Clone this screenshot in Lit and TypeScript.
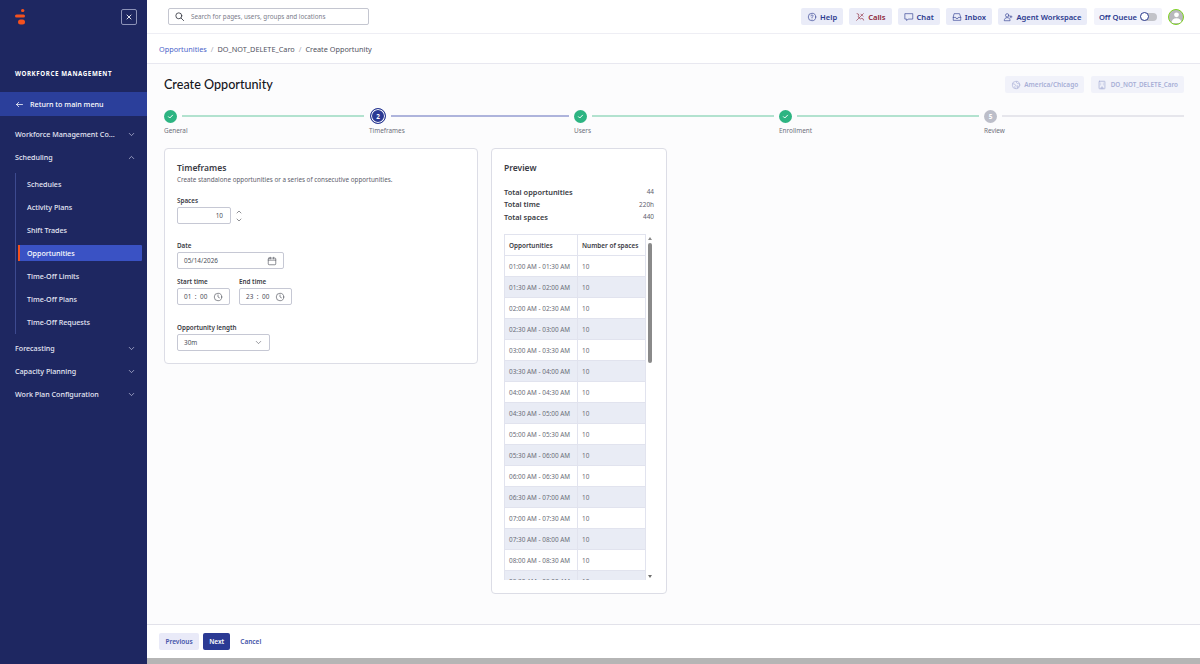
import { LitElement, html, css, svg } from 'lit';
import { customElement } from 'lit/decorators.js';

const icon = (size: number, body: unknown, sw = 1.5) => html`<svg
  width=${size} height=${size} viewBox="0 0 24 24" fill="none" stroke="currentColor"
  stroke-width=${sw} stroke-linecap="round" stroke-linejoin="round">${body}</svg>`;

const chevronDown = svg`<path d="M6 9l6 6 6-6"/>`;
const chevronUp = svg`<path d="M6 15l6-6 6 6"/>`;
const clock = svg`<circle cx="12" cy="12" r="9"/><path d="M12 7v5l3.5 2"/>`;
const check = svg`<path d="M6.5 12.5l3.5 3.5 7.5-7.5"/>`;

const sideGroups = ['Forecasting', 'Capacity Planning', 'Work Plan Configuration'];
const subItems = ['Schedules', 'Activity Plans', 'Shift Trades', 'Opportunities', 'Time-Off Limits', 'Time-Off Plans', 'Time-Off Requests'];

const fmt = (mins: number) => {
  const h = Math.floor(mins / 60);
  return `${String(h).padStart(2, '0')}:${String(mins % 60).padStart(2, '0')} AM`;
};
const slots = Array.from({ length: 16 }, (_, i) => `${fmt(60 + i * 30)} - ${fmt(90 + i * 30)}`);

const steps = [
  { label: 'General', state: 'done' },
  { label: 'Timeframes', state: 'current' },
  { label: 'Users', state: 'done' },
  { label: 'Enrollment', state: 'done' },
  { label: 'Review', state: 'todo' },
];

@customElement('side-nav')
export class SideNav extends LitElement {
  static styles = css`
    :host {
      display: block;
      width: 147px;
      flex: none;
      background: #1e2761;
      color: #e6e8f5;
      font: 500 7.15px 'Noto Sans', sans-serif;
    }
    .head {
      height: 34px;
      position: relative;
      display: flex;
      align-items: center;
      justify-content: space-between;
      padding: 0 10px 0 15px;
    }
    .close {
      width: 16px;
      height: 16px;
      box-sizing: border-box;
      border: 1px solid #8d93b8;
      border-radius: 2px;
      display: flex;
      align-items: center;
      justify-content: center;
      color: #fff;
    }
    .section {
      height: 58px;
      box-sizing: border-box;
      padding: 33px 0 0 15px;
      font-size: 6.2px;
      line-height: 14px;
      font-weight: 700;
      letter-spacing: 0.58px;
      color: #fff;
    }
    .back {
      height: 24px;
      background: #2b3f9b;
      display: flex;
      align-items: center;
      gap: 6px;
      padding-left: 15px;
      color: #fff;
      font-size: 7.2px;
    }
    .list { padding-top: 6.5px; }
    .group {
      height: 23px;
      display: flex;
      align-items: center;
      justify-content: space-between;
      padding: 0 11px 0 15px;
      white-space: nowrap;
    }
    .sub {
      margin: 4px 0 3px 15px;
      border-left: 1px solid #3d4a8f;
      padding-left: 2px;
      width: 124px;
    }
    .item {
      height: 23px;
      display: flex;
      align-items: center;
      padding-left: 9px;
      box-sizing: border-box;
    }
    .item.active {
      height: 16px;
      margin: 3.5px 0;
      background: #3a52c4;
      border-left: 2px solid #f4511e;
      padding-left: 7px;
      color: #fff;
      border-radius: 0 1px 1px 0;
    }
    .chev { color: #c9cde6; display: flex; }
  `;

  render() {
    return html`
      <div class="head">
        <svg width="10" height="16" viewBox="0 0 10 16" fill="#f4511e">
          <rect x="6" y="0" width="3.4" height="3" rx="1.5"></rect>
          <rect x="0" y="5.5" width="10" height="3" rx="1.5"></rect>
          <rect x="3" y="10.5" width="7" height="5" rx="2.5"></rect>
        </svg>
        <div class="close">${icon(8, svg`<path d="M6 6l12 12M18 6L6 18"/>`, 2.6)}</div>
      </div>
      <div class="section">WORKFORCE MANAGEMENT</div>
      <div class="back">
        ${icon(9, svg`<path d="M20 12H4M10 6l-6 6 6 6"/>`, 2)}
        <span>Return to main menu</span>
      </div>
      <div class="list">
        <div class="group"><span>Workforce Management Co...</span><span class="chev">${icon(9, chevronDown, 1.8)}</span></div>
        <div class="group"><span>Scheduling</span><span class="chev">${icon(9, chevronUp, 1.8)}</span></div>
        <div class="sub">
          ${subItems.map((s) => html`<div class="item ${s === 'Opportunities' ? 'active' : ''}">${s}</div>`)}
        </div>
        ${sideGroups.map((g) => html`<div class="group"><span>${g}</span><span class="chev">${icon(9, chevronDown, 1.8)}</span></div>`)}
      </div>
    `;
  }
}

@customElement('top-bar')
export class TopBar extends LitElement {
  static styles = css`
    :host {
      display: flex;
      align-items: center;
      justify-content: space-between;
      height: 34px;
      box-sizing: border-box;
      padding: 0 16px 0 21px;
      background: #fff;
      border-bottom: 1px solid #eeeef4;
      font: 600 7.6px 'Noto Sans', sans-serif;
      color: #2b3a8f;
    }
    .search {
      width: 201px;
      height: 17px;
      box-sizing: border-box;
      border: 1px solid #c4c6d0;
      border-radius: 2px;
      display: flex;
      align-items: center;
      gap: 6px;
      padding-left: 5px;
      font-size: 6.3px;
      font-weight: 400;
      color: #7b7d8a;
    }
    .search svg { color: #33353f; }
    .actions { display: flex; align-items: center; gap: 6px; }
    .btn {
      height: 17px;
      display: flex;
      align-items: center;
      gap: 3px;
      padding: 0 6px;
      border-radius: 2px;
      background: #eaecf8;
    }
    .agent { padding: 0 5.5px; }
    .calls { color: #8c2436; }
    .queue {
      background: #f2f3fb;
      gap: 3px;
      padding: 0 5px;
      margin-left: 1px;
    }
    .toggle {
      width: 17px;
      height: 8px;
      border-radius: 4px;
      background: #c2c3c9;
      position: relative;
    }
    .toggle::before {
      content: '';
      position: absolute;
      left: 0;
      top: -0.5px;
      width: 9px;
      height: 9px;
      box-sizing: border-box;
      border-radius: 50%;
      border: 1.2px solid #2b3a8f;
      background: #fff;
    }
    .avatar {
      width: 16px;
      height: 16px;
      box-sizing: border-box;
      border-radius: 50%;
      border: 1.5px solid #7ed321;
      background: #b9b9bd;
      overflow: hidden;
      display: flex;
      align-items: center;
      justify-content: center;
    }
  `;

  render() {
    return html`
      <div class="search">
        ${icon(11, svg`<circle cx="10.5" cy="10.5" r="6.5"/><path d="M15.5 15.5L21 21"/>`, 1.8)}
        <span>Search for pages, users, groups and locations</span>
      </div>
      <div class="actions">
        <div class="btn">
          ${icon(10, svg`<circle cx="12" cy="12" r="9"/><path d="M9.5 9.5a2.5 2.5 0 1 1 3.6 2.2c-.8.4-1.1 1-1.1 1.8"/><path d="M12 17v.01"/>`)}
          <span>Help</span>
        </div>
        <div class="btn calls">
          ${icon(10, svg`<path d="M5 4l3 1 1.5 4-2 1.5a11 11 0 0 0 6.5 6.5l1.5-2 4 1.5 1 3"/><path d="M4 20L20 4"/><path d="M14 5l5 5"/>`)}
          <span>Calls</span>
        </div>
        <div class="btn">
          ${icon(10, svg`<path d="M3 4h18v13H10l-3.5 3.5V17H3z"/>`)}
          <span>Chat</span>
        </div>
        <div class="btn">
          ${icon(10, svg`<path d="M6 4h12l3 9v7H3v-7z"/><path d="M3 13h6a3 3 0 0 0 6 0h6"/>`)}
          <span>Inbox</span>
        </div>
        <div class="btn agent">
          ${icon(10, svg`<circle cx="10" cy="8" r="4"/><path d="M3 20c0-4 3-6.5 7-6.5s7 2.5 7 6.5z"/><path d="M19 9v5M16.5 11.5h5"/>`)}
          <span>Agent Workspace</span>
        </div>
        <div class="btn queue"><span>Off Queue</span><div class="toggle"></div></div>
        <div class="avatar">
          <svg width="13" height="13" viewBox="0 0 13 13" fill="#fff">
            <circle cx="6.5" cy="4.8" r="2.4"></circle>
            <path d="M1.5 13c0-3 2-4.8 5-4.8s5 1.8 5 4.8z"></path>
          </svg>
        </div>
      </div>
    `;
  }
}

@customElement('step-bar')
export class StepBar extends LitElement {
  static styles = css`
    :host {
      display: flex;
      margin-top: 15px;
      font: 400 6.4px 'Noto Sans', sans-serif;
      color: #6d6f7b;
    }
    .step { width: 205px; }
    .step:last-child { width: 200px; }
    .row { height: 16px; display: flex; align-items: center; gap: 5px; }
    .dot {
      width: 13px;
      height: 13px;
      flex: none;
      border-radius: 50%;
      display: flex;
      align-items: center;
      justify-content: center;
      color: #fff;
      font-size: 6.4px;
      font-weight: 700;
    }
    .done .dot { background: #2db482; }
    .todo .dot { background: #bcbec9; }
    .current .dot {
      width: 16px;
      height: 16px;
      box-sizing: border-box;
      margin-left: 1px;
      background: #2b3a94;
      border: 1.5px solid #2b3a94;
      box-shadow: inset 0 0 0 1px #fff;
    }
    .line { flex: 1; height: 1.5px; margin-right: 5px; background: #b2e2cf; }
    .current .line { background: #aeb4dc; margin-right: 5px; }
    .todo .line { background: #e6e6ec; margin-right: 0; }
    .label { margin-top: 2px; line-height: 10px; }
  `;

  render() {
    return steps.map((s, i) => html`
      <div class="step ${s.state}">
        <div class="row">
          <div class="dot">${s.state === 'done' ? icon(9, check, 2.6) : i + 1}</div>
          <div class="line"></div>
        </div>
        <div class="label">${s.label}</div>
      </div>
    `);
  }
}

@customElement('timeframes-card')
export class TimeframesCard extends LitElement {
  static styles = css`
    :host {
      display: block;
      width: 314px;
      height: 216px;
      box-sizing: border-box;
      background: #fff;
      border: 1px solid #dcdde6;
      border-radius: 4px;
      padding: 12px 12px 0;
      font: 400 6.4px 'Noto Sans', sans-serif;
      color: #5e606c;
    }
    h2 {
      margin: 0;
      font-size: 8.5px;
      line-height: 14px;
      font-weight: 600;
      color: #3a3b44;
    }
    .desc { margin-top: 0; line-height: 10px; font-size: 6.3px; }
    label {
      display: block;
      font-size: 6.3px;
      line-height: 9px;
      font-weight: 600;
      color: #3a3b44;
      margin-bottom: 2px;
    }
    .input {
      height: 17px;
      box-sizing: border-box;
      border: 1px solid #c6c8d4;
      border-radius: 2px;
      display: flex;
      align-items: center;
      justify-content: space-between;
      padding: 0 6px;
      background: #fff;
      color: #4c4e59;
    }
    .spaces { margin-top: 11px; }
    .spaces-row { display: flex; align-items: center; gap: 4px; }
    .spaces .input { width: 54px; justify-content: flex-end; padding-right: 7px; }
    .stepper { display: flex; flex-direction: column; color: #44464e; line-height: 0; }
    .date { margin-top: 17px; }
    .date .input { width: 107px; }
    .times { display: flex; gap: 9px; margin-top: 8px; }
    .t1 .input { width: 53px; }
    .input svg { color: #4c4e59; }
    .hm { display: flex; gap: 3.5px; }
    .length { margin-top: 18px; }
    .length .input { width: 93px; }
  `;

  render() {
    return html`
      <h2>Timeframes</h2>
      <div class="desc">Create standalone opportunities or a series of consecutive opportunities.</div>
      <div class="spaces">
        <label>Spaces</label>
        <div class="spaces-row">
          <div class="input">10</div>
          <div class="stepper">${icon(8, chevronUp, 1.8)}${icon(8, chevronDown, 1.8)}</div>
        </div>
      </div>
      <div class="date">
        <label>Date</label>
        <div class="input">
          <span>05/14/2026</span>
          ${icon(10, svg`<rect x="3" y="5" width="18" height="16" rx="2"/><path d="M3 10h18M8 3v4M16 3v4"/>`)}
        </div>
      </div>
      <div class="times">
        <div class="t1">
          <label>Start time</label>
          <div class="input"><span class="hm"><span>01</span><span>:</span><span>00</span></span>${icon(10, clock)}</div>
        </div>
        <div class="t1">
          <label>End time</label>
          <div class="input"><span class="hm"><span>23</span><span>:</span><span>00</span></span>${icon(10, clock)}</div>
        </div>
      </div>
      <div class="length">
        <label>Opportunity length</label>
        <div class="input"><span>30m</span>${icon(9, chevronDown)}</div>
      </div>
    `;
  }
}

@customElement('preview-card')
export class PreviewCard extends LitElement {
  static styles = css`
    :host {
      display: block;
      width: 176px;
      height: 446px;
      box-sizing: border-box;
      background: #fff;
      border: 1px solid #dcdde6;
      border-radius: 4px;
      padding: 12px 12px 0;
      font: 400 6.4px 'Noto Sans', sans-serif;
      color: #5e606c;
    }
    h2 {
      margin: 0;
      font-size: 8.5px;
      line-height: 14px;
      font-weight: 600;
      color: #3a3b44;
    }
    .totals { margin-top: 10.5px; }
    .total {
      height: 12.5px;
      display: flex;
      align-items: center;
      justify-content: space-between;
    }
    .total b { font-weight: 600; font-size: 7.4px; color: #3a3b44; }
    .wrap {
      margin-top: 11px;
      height: 346px;
      display: flex;
    }
    .scroller { width: 142px; height: 100%; overflow: hidden; }
    table {
      width: 142px;
      border-collapse: collapse;
      table-layout: fixed;
      background: #fff;
    }
    th, td {
      height: 21px;
      box-sizing: border-box;
      padding: 0 0 0 4px;
      border: 1px solid #e1e3ee;
      text-align: left;
      white-space: nowrap;
      color: #6a6c78;
    }
    th { font-weight: 600; color: #3a3b44; }
    .c1 { width: 73px; }
    tr.alt td { background: #e9ecf5; }
    .bar {
      width: 8px;
      display: flex;
      flex-direction: column;
      align-items: center;
      justify-content: space-between;
      position: relative;
    }
    .arrow { width: 0; height: 0; border-left: 2.5px solid transparent; border-right: 2.5px solid transparent; margin-top: 3px; }
    .arrow.up { border-bottom: 3.5px solid #8a8a8a; }
    .arrow.dn { border-top: 3.5px solid #6f6f6f; margin: 0 0 2px; }
    .thumb {
      position: absolute;
      top: 9px;
      left: 2px;
      width: 4px;
      height: 120px;
      border-radius: 2px;
      background: #8a8a8a;
    }
  `;

  render() {
    return html`
      <h2>Preview</h2>
      <div class="totals">
        <div class="total"><b>Total opportunities</b><span>44</span></div>
        <div class="total"><b>Total time</b><span>220h</span></div>
        <div class="total"><b>Total spaces</b><span>440</span></div>
      </div>
      <div class="wrap">
        <div class="scroller">
          <table>
            <thead><tr><th class="c1">Opportunities</th><th>Number of spaces</th></tr></thead>
            <tbody>
              ${slots.map((s, i) => html`<tr class=${i % 2 ? 'alt' : ''}><td>${s}</td><td>10</td></tr>`)}
            </tbody>
          </table>
        </div>
        <div class="bar">
          <div class="arrow up"></div>
          <div class="thumb"></div>
          <div class="arrow dn"></div>
        </div>
      </div>
    `;
  }
}

@customElement('app-root')
export class AppRoot extends LitElement {
  static styles = css`
    :host {
      display: flex;
      height: 664px;
      width: 1200px;
      overflow: hidden;
      font-family: 'Noto Sans', sans-serif;
    }
    .main {
      flex: 1;
      min-width: 0;
      display: flex;
      flex-direction: column;
      background: #fcfcfd;
    }
    .crumbs {
      height: 30px;
      box-sizing: border-box;
      display: flex;
      align-items: center;
      gap: 4px;
      padding-left: 12px;
      background: #fff;
      border-bottom: 1.5px solid #e8e8f0;
      font-size: 7.3px;
      color: #50525e;
    }
    .crumbs a { color: #4a63c9; }
    .crumbs i { font-style: normal; color: #a9abb6; }
    .content { flex: 1; min-height: 0; padding: 12px 16px 0 17px; }
    .title-row {
      display: flex;
      align-items: center;
      justify-content: space-between;
      height: 17px;
    }
    h1 {
      margin: 0 0 1px;
      font: 500 12.6px Lato, sans-serif;
      color: #15161c;
    }
    .tags { display: flex; gap: 7px; }
    .tag {
      height: 17px;
      display: flex;
      align-items: center;
      gap: 3.5px;
      padding: 0 6px;
      border-radius: 2px;
      background: #f1f2fa;
      color: #a7aed6;
      font-size: 6.5px;
      font-weight: 600;
    }
    .tag.site { font-size: 6.3px; }
    .cards { display: flex; gap: 13px; align-items: flex-start; margin-top: 12px; }
    .footer {
      height: 34px;
      box-sizing: border-box;
      display: flex;
      align-items: center;
      gap: 4px;
      padding: 0 0 0 12px;
      background: #fff;
      border-top: 1px solid #e2e2ea;
      font-size: 6.5px;
      font-weight: 600;
    }
    .fbtn {
      height: 17px;
      display: flex;
      align-items: center;
      padding: 0 6.5px;
      border-radius: 2px;
      color: #4353a8;
    }
    .prev { background: #e9eaf8; }
    .next { background: #2b3a94; color: #fff; padding: 0 6px; }
    .cancel { padding-left: 6px; }
    .strip { height: 6px; flex: none; background: #b5b5b5; }
  `;

  render() {
    return html`
      <side-nav></side-nav>
      <div class="main">
        <top-bar></top-bar>
        <div class="crumbs">
          <a>Opportunities</a><i>/</i><span>DO_NOT_DELETE_Caro</span><i>/</i><span>Create Opportunity</span>
        </div>
        <div class="content">
          <div class="title-row">
            <h1>Create Opportunity</h1>
            <div class="tags">
              <div class="tag">
                ${icon(10, svg`<circle cx="12" cy="12" r="9"/><path d="M4 9l5 1 2 3-2 3 1 4M14 3.5l-1 3 3 2 4 .5M15 14l3 1-2 4z"/>`)}
                <span>America/Chicago</span>
              </div>
              <div class="tag site">
                ${icon(10, svg`<rect x="5" y="3" width="14" height="18" rx="1"/><path d="M9 7.5h.01M15 7.5h.01M9 11.5h.01M15 11.5h.01M10 21v-4h4v4"/>`, 1.8)}
                <span>DO_NOT_DELETE_Caro</span>
              </div>
            </div>
          </div>
          <step-bar></step-bar>
          <div class="cards">
            <timeframes-card></timeframes-card>
            <preview-card></preview-card>
          </div>
        </div>
        <div class="footer">
          <div class="fbtn prev">Previous</div>
          <div class="fbtn next">Next</div>
          <div class="fbtn cancel">Cancel</div>
        </div>
        <div class="strip"></div>
      </div>
    `;
  }
}
